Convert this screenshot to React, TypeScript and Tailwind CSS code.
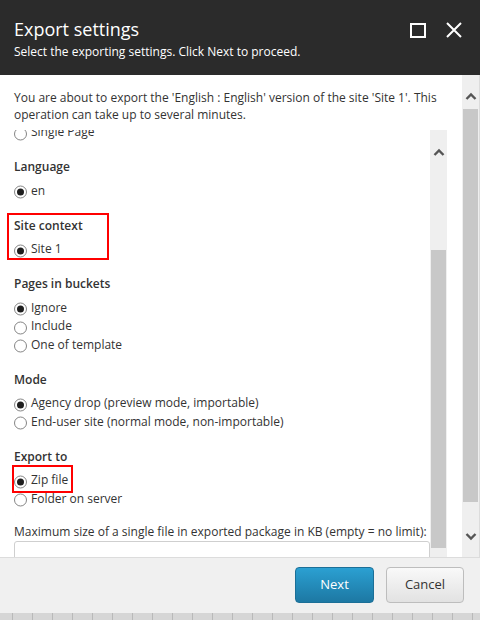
import React from "react";

const font = { fontFamily: '"Open Sans", "Liberation Sans", sans-serif' };

const ChevronUp = () => (
  <svg width="12" height="8" viewBox="0 0 12 8">
    <polyline points="1.5,7 6,2.5 10.5,7" fill="none" stroke="#555" strokeWidth="2.4" />
  </svg>
);

const ChevronDown = () => (
  <svg width="12" height="8" viewBox="0 0 12 8">
    <polyline points="1.5,1 6,5.5 10.5,1" fill="none" stroke="#555" strokeWidth="2.4" />
  </svg>
);

const Radio = ({ label, checked = false }: { label: string; checked?: boolean }) => (
  <div className="flex h-[18.5px] items-center gap-[4px] text-[12px] text-[#333]">
    <span className="flex h-[13px] w-[13px] translate-y-[1.5px] items-center justify-center rounded-full border border-[#858585] bg-white">
      {checked && <span className="h-[7px] w-[7px] rounded-full bg-[#1e1e1e]" />}
    </span>
    <span>{label}</span>
  </div>
);

const Heading = ({ children }: { children: React.ReactNode }) => (
  <div className="mb-[5px] h-[18px] text-[12px] leading-[18px] font-semibold text-[#333]">
    {children}
  </div>
);

const Group = ({
  title,
  options,
  selected,
  marked,
}: {
  title: string;
  options: string[];
  selected: number;
  marked?: "box" | "option";
}) => (
  <div className="relative mb-[17px]">
    {marked === "box" && (
      <div className="pointer-events-none absolute -left-[7px] -top-[4px] h-[47px] w-[102px] border-2 border-[#f00]" />
    )}
    {marked === "option" && (
      <div className="pointer-events-none absolute -left-[2px] top-[18px] h-[28px] w-[61px] border-2 border-[#f00]" />
    )}
    <Heading>{title}</Heading>
    {options.map((o, i) => (
      <Radio key={o} label={o} checked={i === selected} />
    ))}
  </div>
);

const Scrollbar = ({
  top,
  thumb,
  bottom,
  upPad,
  downPad,
}: {
  top: number;
  thumb: number;
  bottom: number;
  upPad: number;
  downPad?: number;
}) => (
  <div className="flex w-[17px] shrink-0 flex-col bg-[#efefef]">
    <div className="flex justify-center" style={{ height: top, paddingTop: upPad }}>
      <ChevronUp />
    </div>
    <div className="mx-[1px] bg-[#c8c8c8]" style={{ height: thumb }} />
    <div className="flex justify-center" style={{ height: bottom, paddingTop: downPad }}>
      {downPad !== undefined && <ChevronDown />}
    </div>
  </div>
);

export default function App() {
  return (
    <div className="flex h-[620px] w-[480px] flex-col overflow-hidden bg-white" style={font}>
      {/* header */}
      <div className="flex h-[75px] shrink-0 justify-between bg-[#2b2b2b] pl-[14px] pr-[18px] text-white">
        <div className="pt-[17px]">
          <div className="h-[24px] text-[18px] leading-[24px]">Export settings</div>
          <div className="mt-[3px] text-[12px] leading-[16px]">
            Select the exporting settings. Click Next to proceed.
          </div>
        </div>
        <div className="flex items-start gap-[20px] pt-[22px]">
          <span className="mt-[1px] h-[15px] w-[16px] border-2 border-white" />
          <svg width="16" height="16" viewBox="0 0 16 16">
            <path d="M1 1 L15 15 M15 1 L1 15" stroke="#fff" strokeWidth="2" />
          </svg>
        </div>
      </div>

      {/* body */}
      <div className="flex h-[482px] shrink-0">
        <div className="flex min-w-0 flex-1 flex-col">
          <p className="pl-[14px] pr-[14px] pt-[14px] text-[12px] leading-[17px] text-[#333]">
            You are about to export the 'English : English' version of the site 'Site 1'. This
            operation can take up to several minutes.
          </p>
          <div className="mt-[7px] flex h-[427px] pr-[15px]">
            <div className="min-w-0 flex-1 overflow-hidden pl-[14px]">
              <div className="-mt-[7.25px]">
                <div className="mb-[17px]">
                  <Radio label="Single Page" />
                </div>
                <Group title="Language" options={["en"]} selected={0} />
                <Group title="Site context" options={["Site 1"]} selected={0} marked="box" />
                <Group
                  title="Pages in buckets"
                  options={["Ignore", "Include", "One of template"]}
                  selected={0}
                />
                <Group
                  title="Mode"
                  options={[
                    "Agency drop (preview mode, importable)",
                    "End-user site (normal mode, non-importable)",
                  ]}
                  selected={0}
                />
                <div className="relative mb-[15px]">
                  <div className="pointer-events-none absolute -left-[2px] top-[17px] h-[28px] w-[61px] border-2 border-[#f00]" />
                  <Heading>Export to</Heading>
                  <Radio label="Zip file" checked />
                  <Radio label="Folder on server" />
                </div>
                <div className="h-[18px] text-[12px] leading-[18px] text-[#333]">
                  Maximum size of a single file in exported package in KB (empty = no limit):
                </div>
                <div className="h-[28px] rounded-[3px] border border-[#cfcfcf] bg-white" />
              </div>
            </div>
            <Scrollbar top={120} thumb={298} bottom={9} upPad={18} />
          </div>
        </div>
        <Scrollbar top={34} thumb={393} bottom={55} upPad={17} downPad={31} />
        <div className="w-[1px] shrink-0 bg-[#dcdcdc]" />
      </div>

      {/* footer */}
      <div className="flex h-[56px] shrink-0 items-start justify-end gap-[12px] border-t border-[#dcdcdc] bg-[#f0f0f0] pr-[16px] pt-[9px]">
        <button className="h-[36px] w-[79px] rounded-[4px] border border-[#1b6f97] bg-gradient-to-b from-[#2ba0d2] to-[#1d78a3] text-[13px] text-white">
          Next
        </button>
        <button className="h-[36px] w-[78px] rounded-[4px] border border-[#bdbdbd] bg-gradient-to-b from-[#f9f9f9] to-[#e2e2e2] text-[13px] text-[#333]">
          Cancel
        </button>
      </div>

      {/* page behind */}
      <div className="flex h-[7px] shrink-0 bg-[#d6d6d6] pl-[12px]">
        {Array.from({ length: 24 }).map((_, i) => (
          <div key={i} className="h-full w-[20px] shrink-0 border-l border-[#b9b9b9]" />
        ))}
      </div>
    </div>
  );
}
